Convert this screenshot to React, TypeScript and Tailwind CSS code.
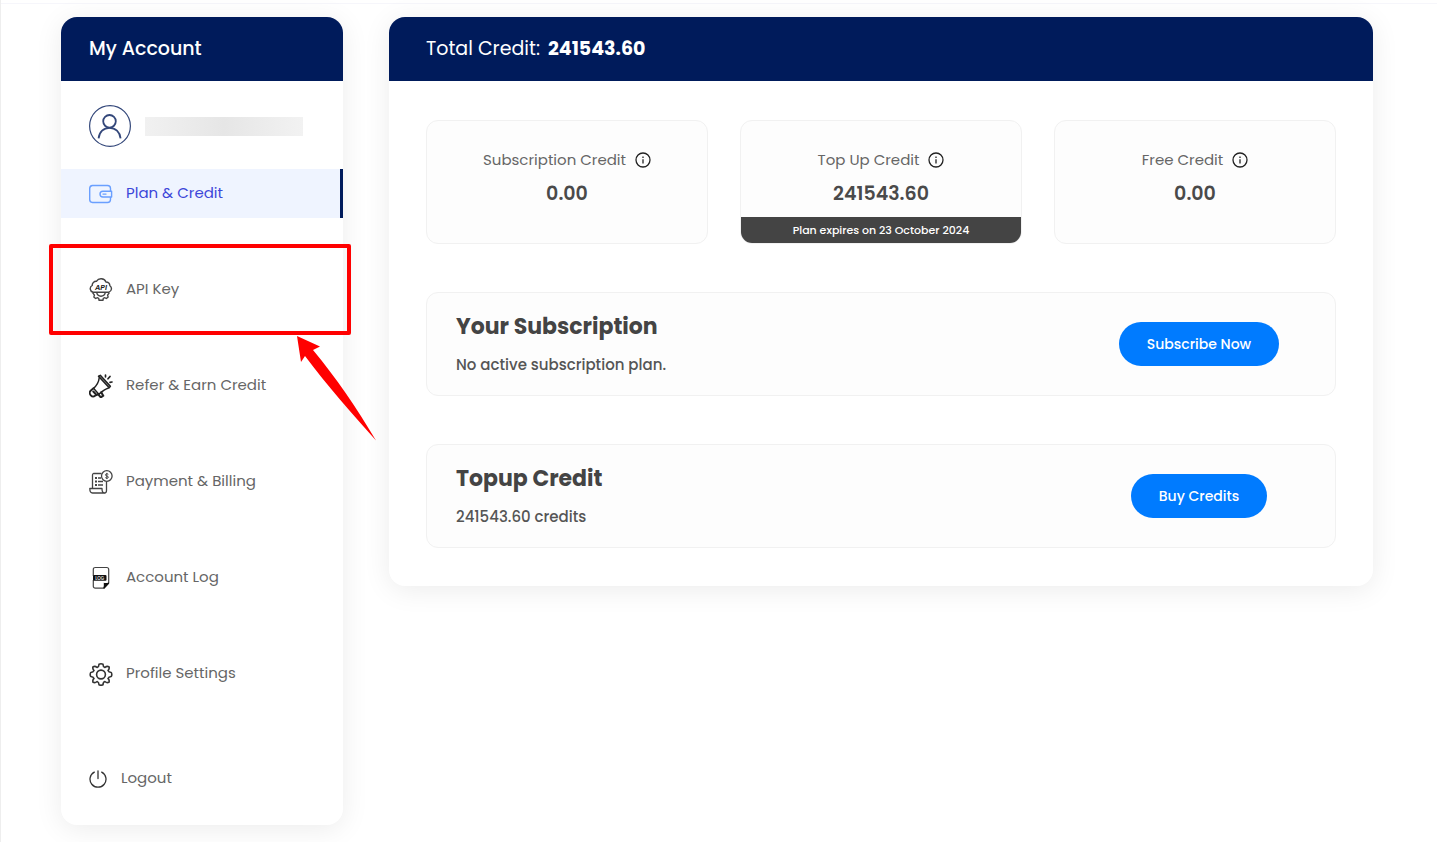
import type { ReactNode } from "react";
import clsx from "clsx";

interface NavItem {
  label: string;
  icon: ReactNode;
  active?: boolean;
  highlighted?: boolean;
}

interface CreditCardProps {
  label: string;
  value: string;
  note?: string;
}

interface PlanRowProps {
  title: string;
  text: string;
  action: string;
}

function AvatarIcon() {
  return (
    <svg className="size-[42px] shrink-0" viewBox="0 0 42 42" fill="none" stroke="#33477a" aria-hidden="true">
      <circle cx="21" cy="21" r="20.4" strokeWidth="1.2" />
      <circle cx="20.5" cy="16.3" r="6.3" strokeWidth="1.8" />
      <path d="M9.600 33.400c.6-6.400 5-10.600 10.900-10.600s10.400 4.200 11.100 10.600" strokeWidth="1.8" />
    </svg>
  );
}

function WalletIcon() {
  return (
    <svg className="h-6 w-6" viewBox="0 0 24 24" fill="none" stroke="#6a9fff" strokeWidth="1.400" aria-hidden="true">
      <path d="M21.500 9V6.500a3 3 0 0 0-3-3H3.500a3 3 0 0 0-2.800 3v11a3 3 0 0 0 2.800 3h15a3 3 0 0 0 3-3V15" />
      <path d="M22.600 9.200h-8.700a2.900 2.900 0 0 0 0 5.800h8.700z" strokeLinejoin="round" />
      <path d="M14 12.100h3" strokeLinecap="round" />
    </svg>
  );
}

function ApiIcon() {
  return (
    <svg className="h-6 w-6" viewBox="0 0 24 24" fill="none" stroke="#444" strokeWidth="1.400" aria-hidden="true">
      <path d="M4 14.200a3.600 3.600 0 0 1-.8-6.700 4 4 0 0 1 4.200-4.200 5.500 5.500 0 0 1 9.600.7 4 4 0 0 1 3.900 3.700 3.700 3.700 0 0 1-1 6.500z" />
      <path d="M3.600 14.700l1.800 2.400-.5 1.800 1.700 1.500 1.900-.7 1.200.8.4 1.800h3.800l.4-1.800 1.200-.8 1.900.7 1.700-1.500-.5-1.800 1.800-2.400" />
      <path d="M7.700 14.700c.5 2.300 2.100 3.500 4.300 3.500s3.800-1.200 4.300-3.500" />
      <text x="12" y="12" textAnchor="middle" fill="#222" stroke="none" fontSize="7.500" fontWeight="600" fontStyle="italic">
        API
      </text>
    </svg>
  );
}

function MegaphoneIcon() {
  return (
    <svg className="h-6 w-6" viewBox="0 0 24 24" fill="none" stroke="#222" strokeWidth="1.500" strokeLinejoin="round" strokeLinecap="round" aria-hidden="true">
      <path d="M9.500 2.200l1.800-.9 10.100 11-1.200 1.400z" fill="#999" />
      <path d="M10.300 3.500C9.800 7.500 8 11.500 4.500 14.300l5.300 6c3.200-2.800 6.500-5.300 9.700-6.300" />
      <path d="M4.500 14.300L1.600 16.700c-1.400 1.300-.9 3.400.2 4.600s3 1.500 4.300.4l3.700-1.500" strokeWidth="1.900" />
      <path d="M4.300 17.500l2.600 2.800M9 20l2.800 3.400 2.500-1.700-2.100-3.300" strokeWidth="2" />
      <path d="M16.500 1.200v1.600M19 4.800l2-2.300M21 8.300l2-.3" strokeWidth="1.700" />
    </svg>
  );
}

function BillingIcon() {
  return (
    <svg className="h-6 w-6" viewBox="0 0 24 24" fill="none" stroke="#444" strokeWidth="1.300" strokeLinejoin="round" aria-hidden="true">
      <path d="M12.500 3.500h-8a1.500 1.500 0 0 0-1 1.500v13M17.500 11.500v9c0 1.600-.8 2.500-2 2.500" />
      <path d="M13 18.500H.8c0 3 .8 4.500 2.700 4.500h12c-1.800 0-2.500-1.500-2.500-4.500z" />
      <circle cx="17.800" cy="6" r="5.300" />
      <path d="M6 8h2M6 11.500h2M6 15h2" strokeWidth="1.800" />
      <path d="M9 8h3M9 11.500h5M9 15h5" strokeWidth="1.400" />
      <path d="M19.300 4.300c-.8-.8-2.900-.6-2.900.6 0 1.400 3 .8 3 2.300 0 1.200-2.200 1.400-3.100.4M17.800 2.900v6.200" strokeWidth="1" />
    </svg>
  );
}

function LogIcon() {
  return (
    <svg className="h-6 w-6" viewBox="0 0 24 24" fill="none" stroke="#444" strokeWidth="1.200" aria-hidden="true">
      <path d="M4.300 10V3.500c0-1.300.9-2 2-2h11.400c1.200 0 2 .7 2 2V17l-4.800 5.200H6.300c-1.200 0-2-.7-2-2V14" />
      <path d="M19.700 17l-4.900 5.300c.8-1.700.8-3 .6-4.800 1.600.4 2.900.2 4.300-.5z" fill="#111" stroke="#111" />
      <rect x="4" y="9" width="13.500" height="5.800" rx="1" fill="#111" stroke="none" />
      <text x="10.700" y="13.500" textAnchor="middle" fill="#ddd" stroke="none" fontSize="4.500" fontWeight="600">
        LOG
      </text>
    </svg>
  );
}

function GearIcon() {
  return (
    <svg className="h-6 w-6" viewBox="0 0 24 24" fill="none" stroke="#333" strokeWidth="1.600" strokeLinejoin="round" aria-hidden="true">
      <circle cx="12" cy="12.500" r="4.400" />
      <path d="M10 2.200Q12 1.200 14 2.200Q14 4.900 15.900 5.500Q17.800 3.800 19.900 4.700Q20.800 6.700 19 8.600Q19.600 10.400 22.300 10.500Q23.300 12.500 22.300 14.500Q19.600 14.600 19 16.400Q20.800 18.300 19.900 20.300Q17.800 21.200 15.900 19.500Q14 20.100 14 22.800Q12 23.800 10 22.800Q10 20.100 8.100 19.500Q6.200 21.200 4.100 20.300Q3.200 18.300 5 16.400Q4.400 14.600 1.700 14.500Q.7 12.500 1.700 10.500Q4.400 10.400 5 8.600Q3.200 6.700 4.100 4.700Q6.200 3.800 8.100 5.500Q10 4.900 10 2.200z" />
    </svg>
  );
}

function PowerIcon() {
  return (
    <svg className="h-[18px] w-[18px]" viewBox="0 0 18 18" fill="none" stroke="#333" strokeWidth="1.300" strokeLinecap="round" aria-hidden="true">
      <path d="M9 .8v7.700M5.300 2.100a8 8 0 1 0 7.400 0" />
    </svg>
  );
}

function InfoIcon() {
  return (
    <svg className="h-4 w-4" viewBox="0 0 16 16" fill="none" stroke="#222" strokeWidth="1.300" aria-hidden="true">
      <circle cx="8" cy="8" r="7" />
      <path d="M8 7.200v4.200M8 4.600v1.400" />
    </svg>
  );
}

const navItems: NavItem[] = [
  { label: "Plan & Credit", icon: <WalletIcon />, active: true },
  { label: "API Key", icon: <ApiIcon />, highlighted: true },
  { label: "Refer & Earn Credit", icon: <MegaphoneIcon /> },
  { label: "Payment & Billing", icon: <BillingIcon /> },
  { label: "Account Log", icon: <LogIcon /> },
  { label: "Profile Settings", icon: <GearIcon /> },
];

// Red frame and arrow pointing at a menu entry
function Callout() {
  return (
    <span className="pointer-events-none absolute -top-[21px] -right-2 -bottom-[21px] -left-3 z-10 rounded-xs border-4 border-[#ff0000]">
      <svg className="absolute -right-[30px] -bottom-[111px] h-[106px] w-20" viewBox="0 0 80 106" fill="#ff0000" aria-hidden="true">
        <path d="M0 0l23 10.500-7 3.500C40 43 59 71 79 104.500 54 76 31 51 8 20L4 26z" />
      </svg>
    </span>
  );
}

function CreditCard({ label, value, note }: CreditCardProps) {
  return (
    <div className="flex h-[124px] flex-col overflow-hidden rounded-xl border border-[#f1f1f1] bg-[#fdfdfd] pt-[27px] text-center">
      <div className="flex items-center justify-center gap-[9px] text-[15px] leading-6 text-[#666]">
        {label}
        <button type="button" aria-label={`About ${label}`}>
          <InfoIcon />
        </button>
      </div>
      <p className="mt-2 text-[19px] leading-7 font-semibold text-[#4a4a4a]">{value}</p>
      {note && (
        <p className="mt-auto bg-[#444] text-[11px] leading-[26px] font-medium text-white">{note}</p>
      )}
    </div>
  );
}

function PlanRow({ title, text, action }: PlanRowProps) {
  return (
    <section className="mt-12 flex h-[104px] items-center rounded-xl border border-[#f1f1f1] bg-[#fdfdfd] pl-[29px]">
      <div className="flex-1">
        <h2 className="text-[22px] leading-8 font-bold text-[#444]">{title}</h2>
        <p className="mt-[10px] text-[15px] leading-6 font-medium text-[#555]">{text}</p>
      </div>
      <div className="flex w-[272px] justify-center">
        <button type="button" className="h-11 rounded-full bg-[#007bff] px-7 text-sm font-medium text-white">
          {action}
        </button>
      </div>
    </section>
  );
}

export default function App() {
  return (
    <div className="min-h-screen border-l border-[#eee] bg-white font-['Poppins','Inter',sans-serif]">
      <div className="h-1 border-b border-[#f6f6fb]" />

      <div className="flex items-start gap-[46px] pt-[13px] pr-16 pb-4 pl-15">
        {/* Sidebar */}
        <aside className="w-[282px] shrink-0 rounded-2xl bg-white pb-[22px] shadow-[0_4px_28px_rgba(0,0,0,0.08)]">
          <h1 className="rounded-t-2xl bg-[#001b5b] px-7 text-[19px] leading-16 font-medium text-white">My Account</h1>

          <div className="flex items-center gap-[14px] px-7 pt-6 pb-[22px]">
            <AvatarIcon />
            <div className="h-[19px] w-[158px] bg-[#e9e9e9] bg-linear-to-r from-[#f1f1f1] via-[#e6e6e6] to-[#f2f2f2]" />
          </div>

          <nav className="flex flex-col gap-[47px] text-[15px] text-[#666]">
            {navItems.map((item) => (
              <a
                key={item.label}
                href="#"
                className={clsx(
                  "relative flex h-[49px] items-center gap-[13px] px-7",
                  item.active && "border-r-3 border-[#001b5b] bg-[#eff4ff] text-[#3d47d9]",
                )}
              >
                {item.icon}
                {item.label}
                {item.highlighted && <Callout />}
              </a>
            ))}
            <a href="#" className="mt-[9px] flex h-[49px] items-center gap-[14px] px-7">
              <PowerIcon />
              Logout
            </a>
          </nav>
        </aside>

        {/* Credit overview */}
        <main className="min-w-0 flex-1 rounded-2xl bg-white shadow-[0_4px_28px_rgba(0,0,0,0.08)]">
          <div className="flex gap-2 rounded-t-2xl bg-[#001b5b] px-[37px] text-[19px] leading-16 text-white">
            <span>Total Credit:</span>
            <strong>241543.60</strong>
          </div>

          <div className="px-[37px] pt-[39px] pb-[38px]">
            <div className="grid grid-cols-3 gap-8">
              <CreditCard label="Subscription Credit" value="0.00" />
              <CreditCard label="Top Up Credit" value="241543.60" note="Plan expires on 23 October 2024" />
              <CreditCard label="Free Credit" value="0.00" />
            </div>

            <PlanRow title="Your Subscription" text="No active subscription plan." action="Subscribe Now" />
            <PlanRow title="Topup Credit" text="241543.60 credits" action="Buy Credits" />
          </div>
        </main>
      </div>
    </div>
  );
}
